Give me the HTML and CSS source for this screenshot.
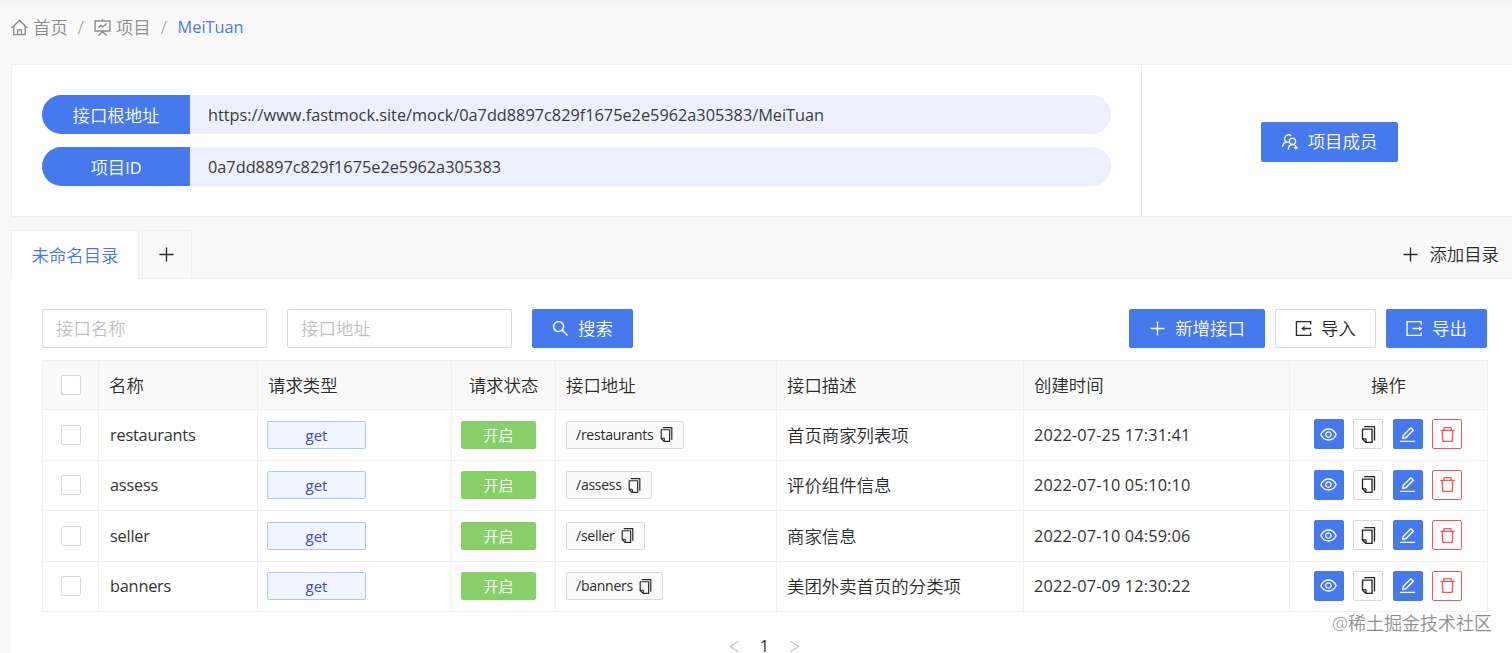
FILE: index.html
```html
<!DOCTYPE html>
<html lang="zh-CN">
<head>
<meta charset="UTF-8">
<title>MeiTuan</title>
<link rel="stylesheet" href="styles.css">
</head>
<body>
    <!-- icons -->
    <svg class="sprite">
        <symbol id="home" viewBox="64 64 896 896"><path class="line" d="M100 540L512 128l412 412M212 450v434h600V450M412 884V640h200v244"/></symbol>
        <symbol id="project" viewBox="64 64 896 896"><path class="line" d="M512 70v90M120 168h784v530H120zM290 936l222-206 222 206M300 500l130-110 90 100 210-190"/></symbol>
        <symbol id="members" viewBox="64 64 896 896"><path class="line" d="M400 930c0-150 80-260 216-260 80 0 130 30 160 60M616 670a166 166 0 1 1 1 0M100 790c10-140 80-220 190-260-100-60-110-190-50-280 60-90 200-130 310-40M290 530c40 14 90 20 130 4M800 740v200M700 840h200"/></symbol>
        <symbol id="plus" viewBox="64 64 896 896"><path class="line" d="M512 140v744M140 512h744"/></symbol>
        <symbol id="search" viewBox="64 64 896 896"><path d="M909.6 854.5L649.9 594.8C690.2 542.7 712 479 712 412c0-80.2-31.3-155.4-87.9-212.1-56.6-56.7-132-87.9-212.1-87.9s-155.5 31.3-212.1 87.9C143.2 256.5 112 331.8 112 412c0 80.1 31.3 155.5 87.9 212.1C256.5 680.8 331.8 712 412 712c67 0 130.6-21.8 182.7-62l259.7 259.6a8.2 8.2 0 0011.6 0l43.6-43.5a8.2 8.2 0 000-11.6zM570.4 570.4C528 612.7 471.8 636 412 636s-116-23.3-158.4-65.6C211.3 528 188 471.8 188 412s23.3-116.1 65.6-158.4C296 211.3 352.2 188 412 188s116.1 23.2 158.4 65.6S636 352.2 636 412s-23.3 116.1-65.6 158.4z"/></symbol>
        <symbol id="import" viewBox="64 64 896 896"><path class="line" d="M890 300V148H140v728h750V724M500 512h400"/><path d="M390 512l180-130v260z"/></symbol>
        <symbol id="export" viewBox="64 64 896 896"><path class="line" d="M860 300V148H120v728h740V724M400 512h400"/><path d="M930 512L750 382v260z"/></symbol>
        <symbol id="eye" viewBox="64 64 896 896"><path d="M942.2 486.2C847.4 286.5 704.1 186 512 186c-192.2 0-335.4 100.5-430.2 300.3a60.3 60.3 0 000 51.5C176.6 737.5 319.9 838 512 838c192.2 0 335.4-100.5 430.2-300.3 7.7-16.2 7.7-35 0-51.5zM512 766c-161.3 0-279.4-81.8-362.7-254C232.6 339.8 350.7 258 512 258c161.3 0 279.4 81.8 362.7 254C791.5 684.2 673.4 766 512 766zm-4-430c-97.2 0-176 78.8-176 176s78.8 176 176 176 176-78.8 176-176-78.8-176-176-176zm0 288c-61.9 0-112-50.1-112-112s50.1-112 112-112 112 50.1 112 112-50.1 112-112 112z"/></symbol>
        <symbol id="copy" viewBox="64 64 896 896"><path d="M832 64H296c-4.4 0-8 3.6-8 8v56c0 4.4 3.6 8 8 8h496v688c0 4.4 3.6 8 8 8h56c4.4 0 8-3.6 8-8V96c0-17.7-14.3-32-32-32zM704 192H192c-17.7 0-32 14.3-32 32v530.7c0 8.5 3.4 16.6 9.4 22.6l173.3 173.3c2.2 2.2 4.7 4 7.4 5.5v1.9h4.2c3.5 1.3 7.2 2 11 2H704c17.7 0 32-14.3 32-32V224c0-17.7-14.3-32-32-32zM350 856.2L263.9 770H350v86.2zM664 888H414V746c0-22.1-17.9-40-40-40H232V264h432v624z"/></symbol>
        <symbol id="edit" viewBox="64 64 896 896"><path d="M257.7 752c2 0 4-.2 6-.5L431.9 722c2-.4 3.9-1.3 5.3-2.8l423.9-423.9a9.96 9.96 0 000-14.1L694.9 114.9c-1.9-1.9-4.4-2.9-7.1-2.9s-5.2 1-7.1 2.9L256.8 538.8c-1.5 1.5-2.4 3.3-2.8 5.3l-29.5 168.2a33.5 33.5 0 009.4 29.8c6.6 6.4 14.9 9.9 23.8 9.9zm67.4-174.4L687.8 215l73.3 73.3-362.7 362.6-88.9 15.7 15.6-89zM880 836H144c-17.7 0-32 14.3-32 32v36c0 4.4 3.6 8 8 8h784c4.4 0 8-3.6 8-8v-36c0-17.7-14.3-32-32-32z"/></symbol>
        <symbol id="delete" viewBox="64 64 896 896"><path d="M360 184h-8c4.4 0 8-3.6 8-8v8h304v-8c0 4.4 3.6 8 8 8h-8v72h72v-80c0-35.3-28.7-64-64-64H352c-35.3 0-64 28.7-64 64v80h72v-72zm504 72H160c-17.7 0-32 14.3-32 32v32c0 4.4 3.6 8 8 8h60.4l24.7 523c1.6 34.1 29.8 61 63.9 61h454c34.2 0 62.3-26.8 63.9-61l24.7-523H888c4.4 0 8-3.6 8-8v-32c0-17.7-14.3-32-32-32zM731.3 840H292.7l-24.2-512h487l-24.2 512z"/></symbol>
        <symbol id="left" viewBox="64 64 896 896"><path class="line" d="M800 150L220 512l580 362"/></symbol>
        <symbol id="right" viewBox="64 64 896 896"><path class="line" d="M224 150l580 362-580 362"/></symbol>
    </svg>

    <div class="breadcrumb">
        <svg class="icon"><use href="#home"/></svg>
        <span>首页</span>
        <span class="slash">/</span>
        <svg class="icon"><use href="#project"/></svg>
        <span>项目</span>
        <span class="slash">/</span>
        <a class="en current">MeiTuan</a>
    </div>

    <div class="info">
        <div class="info-left">
            <div class="pill"><div class="pill-name">接口根地址</div><div class="pill-value en">https://www.fastmock.site/mock/0a7dd8897c829f1675e2e5962a305383/MeiTuan</div></div>
            <div class="pill"><div class="pill-name">项目<span class="en">ID</span></div><div class="pill-value en">0a7dd8897c829f1675e2e5962a305383</div></div>
        </div>
        <div class="info-right">
            <button class="btn primary member"><svg class="icon"><use href="#members"/></svg>项目成员</button>
        </div>
    </div>

    <div class="tabs">
        <div class="tab active">未命名目录</div>
        <div class="tab add"><svg class="icon"><use href="#plus"/></svg></div>
        <div class="add-dir"><svg class="icon"><use href="#plus"/></svg>添加目录</div>
    </div>

    <div class="content">
        <div class="toolbar">
            <input type="text" placeholder="接口名称">
            <input type="text" placeholder="接口地址">
            <button class="btn primary search"><svg class="icon"><use href="#search"/></svg>搜索</button>
            <div class="toolbar-right">
                <button class="btn primary create"><svg class="icon"><use href="#plus"/></svg>新增接口</button>
                <button class="btn"><svg class="icon"><use href="#import"/></svg>导入</button>
                <button class="btn primary"><svg class="icon"><use href="#export"/></svg>导出</button>
            </div>
        </div>

        <table>
            <colgroup>
                <col class="c-check"><col class="c-name"><col class="c-type"><col class="c-state"><col class="c-url"><col class="c-desc"><col class="c-time"><col class="c-action">
            </colgroup>
            <thead>
                <tr>
                    <th class="center"><span class="checkbox"></span></th>
                    <th>名称</th>
                    <th>请求类型</th>
                    <th class="center">请求状态</th>
                    <th>接口地址</th>
                    <th>接口描述</th>
                    <th>创建时间</th>
                    <th class="center">操作</th>
                </tr>
            </thead>
            <tbody>
                <tr>
                    <td class="center"><span class="checkbox"></span></td>
                    <td class="en name">restaurants</td>
                    <td><span class="tag get">get</span></td>
                    <td><span class="tag open">开启</span></td>
                    <td><span class="tag url">/restaurants<svg class="icon"><use href="#copy"/></svg></span></td>
                    <td>首页商家列表项</td>
                    <td class="en time">2022-07-25 17:31:41</td>
                    <td><div class="actions"><button class="act blue"><svg class="icon"><use href="#eye"/></svg></button><button class="act"><svg class="icon"><use href="#copy"/></svg></button><button class="act blue"><svg class="icon"><use href="#edit"/></svg></button><button class="act red"><svg class="icon"><use href="#delete"/></svg></button></div></td>
                </tr>
                <tr>
                    <td class="center"><span class="checkbox"></span></td>
                    <td class="en name">assess</td>
                    <td><span class="tag get">get</span></td>
                    <td><span class="tag open">开启</span></td>
                    <td><span class="tag url">/assess<svg class="icon"><use href="#copy"/></svg></span></td>
                    <td>评价组件信息</td>
                    <td class="en time">2022-07-10 05:10:10</td>
                    <td><div class="actions"><button class="act blue"><svg class="icon"><use href="#eye"/></svg></button><button class="act"><svg class="icon"><use href="#copy"/></svg></button><button class="act blue"><svg class="icon"><use href="#edit"/></svg></button><button class="act red"><svg class="icon"><use href="#delete"/></svg></button></div></td>
                </tr>
                <tr>
                    <td class="center"><span class="checkbox"></span></td>
                    <td class="en name">seller</td>
                    <td><span class="tag get">get</span></td>
                    <td><span class="tag open">开启</span></td>
                    <td><span class="tag url">/seller<svg class="icon"><use href="#copy"/></svg></span></td>
                    <td>商家信息</td>
                    <td class="en time">2022-07-10 04:59:06</td>
                    <td><div class="actions"><button class="act blue"><svg class="icon"><use href="#eye"/></svg></button><button class="act"><svg class="icon"><use href="#copy"/></svg></button><button class="act blue"><svg class="icon"><use href="#edit"/></svg></button><button class="act red"><svg class="icon"><use href="#delete"/></svg></button></div></td>
                </tr>
                <tr>
                    <td class="center"><span class="checkbox"></span></td>
                    <td class="en name">banners</td>
                    <td><span class="tag get">get</span></td>
                    <td><span class="tag open">开启</span></td>
                    <td><span class="tag url">/banners<svg class="icon"><use href="#copy"/></svg></span></td>
                    <td>美团外卖首页的分类项</td>
                    <td class="en time">2022-07-09 12:30:22</td>
                    <td><div class="actions"><button class="act blue"><svg class="icon"><use href="#eye"/></svg></button><button class="act"><svg class="icon"><use href="#copy"/></svg></button><button class="act blue"><svg class="icon"><use href="#edit"/></svg></button><button class="act red"><svg class="icon"><use href="#delete"/></svg></button></div></td>
                </tr>
            </tbody>
        </table>

        <div class="pagination">
            <svg class="icon"><use href="#left"/></svg>
            <span class="en">1</span>
            <svg class="icon"><use href="#right"/></svg>
        </div>
    </div>
    <div class="watermark">@稀土掘金技术社区</div>
</body>
</html>
```
FILE: styles.css
```css
* {
    box-sizing: border-box;
}
body {
    margin: 0;
    height: 653px;
    padding-left: 11px;
    overflow: hidden;
    position: relative;
    background: linear-gradient(#f2f2f2, #f9f9f9 8px);
    font: 17.4px/26px "Open Sans", "Noto Sans CJK SC", sans-serif;
    font-weight: 350;
    color: #2b2b2b;
}
.en {
    font-size: 16.3px;
    font-weight: 400;
}
.sprite {
    display: none;
}
.icon {
    width: 17px;
    height: 17px;
    fill: currentColor;
    flex: none;
}
.line {
    fill: none;
    stroke: currentColor;
    stroke-width: 72;
}

/* breadcrumb */
.breadcrumb {
    display: flex;
    align-items: center;
    height: 64px;
    padding-bottom: 10px;
    color: #8c8c8c;
}
.breadcrumb .icon {
    margin-right: 5px;
}
.slash {
    width: 26px;
    text-align: center;
}
.current {
    color: #4678ee;
    margin-left: 1px;
}

/* project info */
.info {
    display: flex;
    height: 153px;
    background: #fff;
    border: 1px solid #f0f0f0;
    border-right: 0;
}
.info-left {
    width: 1130px;
    padding: 30px 30px 0;
    border-right: 1px solid #ebebeb;
}
.pill {
    display: flex;
    height: 39px;
    line-height: 40px;
    margin-bottom: 13px;
    border-radius: 20px;
    overflow: hidden;
    background: #edeffc;
}
.pill-name {
    width: 148px;
    text-align: center;
    color: #fff;
    background: #4678ee;
}
.pill-value {
    padding-left: 18px;
    color: #3a3a3a;
}
.info-right {
    flex: 1;
    display: flex;
    align-items: center;
    padding: 2px 0 0 119px;
}

/* buttons */
.btn {
    display: flex;
    align-items: center;
    justify-content: center;
    gap: 9px;
    width: 101px;
    height: 39px;
    padding: 0 0 1px;
    border: 1px solid #d9d9d9;
    border-radius: 2px;
    background: #fff;
    color: #2b2b2b;
    font: inherit;
}
.primary {
    background: #4678ee;
    border-color: #4678ee;
    color: #fff;
}
.create {
    width: 136px;
}
.member {
    width: 137px;
    height: 40px;
}

/* tabs */
.tabs {
    display: flex;
    height: 49px;
    margin-top: 13px;
    border-bottom: 1px solid #f0f0f0;
}
.tab {
    height: 49px;
    border: 1px solid #f0f0f0;
    display: flex;
    align-items: center;
    justify-content: center;
}
.active {
    width: 128px;
    margin-right: 3px;
    background: #fff;
    border-bottom-color: #fff;
    color: #4678ee;
}
.add {
    width: 50px;
    padding: 0 1px 1px 0;
    background: #fafafa;
}
.add-dir {
    display: flex;
    align-items: center;
    gap: 10px;
    margin-left: auto;
    padding-right: 13px;
}

/* list */
.content {
    height: 374px;
    padding: 30px 25px 0 31px;
    background: #fff;
}
.toolbar {
    display: flex;
    height: 51px;
}
input {
    width: 225px;
    height: 39px;
    margin-right: 20px;
    padding: 0 13px 1px;
    border: 1px solid #d9d9d9;
    border-radius: 2px;
    font: inherit;
}
input::placeholder {
    color: #bfbfbf;
}
.toolbar-right {
    display: flex;
    gap: 10px;
    margin-left: auto;
}
table {
    width: 1445px;
    table-layout: fixed;
    border-collapse: collapse;
}
.c-check { width: 56px; }
.c-name { width: 159px; }
.c-type { width: 194px; }
.c-state { width: 104px; }
.c-url { width: 221px; }
.c-desc { width: 247px; }
.c-time { width: 266px; }
.c-action { width: 198px; }
th, td {
    height: 50.5px;
    padding: 0 10px;
    border: 1px solid #f0f0f0;
    text-align: left;
    font-weight: inherit;
}
th {
    height: 49px;
    background: #fafafa;
}
.name {
    padding-left: 11px;
    letter-spacing: -0.2px;
}
.time {
    letter-spacing: 0.15px;
}
td.en {
    font-weight: 400;
    color: #333;
}
.center {
    text-align: center;
}
.checkbox {
    display: block;
    width: 20px;
    height: 20px;
    margin: 0 auto;
    border: 1px solid #d9d9d9;
    border-radius: 2px;
    background: #fff;
}
.tag {
    display: flex;
    align-items: center;
    width: fit-content;
    height: 28px;
    margin-left: -1px;
    border: 1px solid #d9d9d9;
    border-radius: 2px;
    background: #fafafa;
    font-size: 15px;
}
.get {
    justify-content: center;
    width: 99px;
    color: #3f49c4;
    background: #f0f5ff;
    border-color: #adc6f5;
    font-weight: 400;
}
.open {
    justify-content: center;
    width: 75px;
    color: #fff;
    background: #87d068;
    border-color: #87d068;
}
.url {
    margin-left: 0;
    padding: 0 9px;
    font-size: 14px;
    font-weight: 400;
    letter-spacing: -0.25px;
}
.url .icon {
    width: 15px;
    height: 15px;
    margin-left: 5px;
}
.actions {
    display: flex;
    justify-content: center;
    gap: 9.5px;
    padding: 0 1px 1px 0;
}
.act {
    display: flex;
    align-items: center;
    justify-content: center;
    width: 30px;
    height: 30px;
    padding: 0;
    border: 1px solid #d9d9d9;
    border-radius: 2px;
    background: #fff;
    color: #262626;
}
.blue {
    background: #4678ee;
    border-color: #4678ee;
    color: #fff;
}
.red {
    border-color: #f0555a;
    color: #f0555a;
}
.pagination {
    display: flex;
    justify-content: center;
    align-items: center;
    gap: 19px;
    height: 14px;
    margin-top: 27px;
    line-height: 12px;
}
.pagination .icon {
    width: 13px;
    height: 13px;
    color: #bfbfbf;
}
.watermark {
    position: absolute;
    right: 20px;
    bottom: 17px;
    font-size: 18px;
    color: #8f8f8f;
}
```
